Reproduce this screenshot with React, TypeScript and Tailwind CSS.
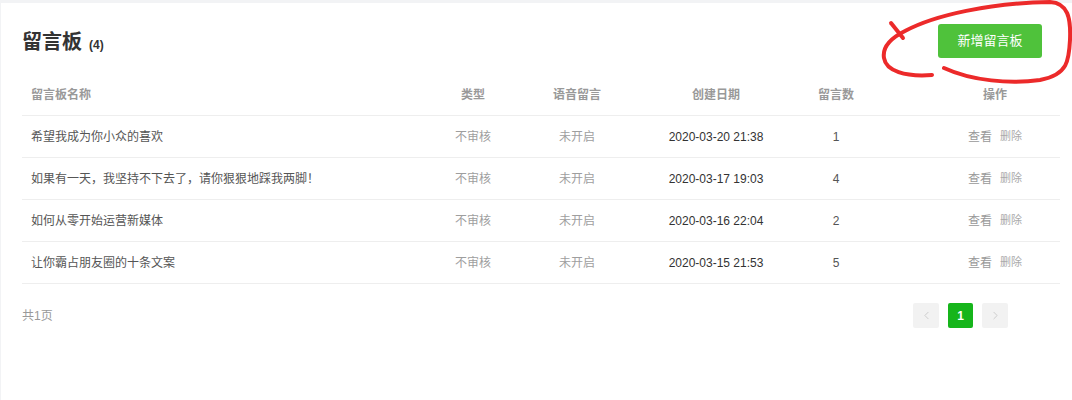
import { ChevronLeft, ChevronRight } from "lucide-react";

const rows = [
  { name: "希望我成为你小众的喜欢", date: "2020-03-20 21:38", count: 1 },
  { name: "如果有一天，我坚持不下去了，请你狠狠地踩我两脚！", date: "2020-03-17 19:03", count: 4 },
  { name: "如何从零开始运营新媒体", date: "2020-03-16 22:04", count: 2 },
  { name: "让你霸占朋友圈的十条文案", date: "2020-03-15 21:53", count: 5 },
];

const cols = "grid grid-cols-[398px_106px_102px_176px_64px_1fr]";

export default function App() {
  return (
    <div
      className="relative h-[400px] w-[1072px] overflow-hidden bg-[#f2f3f5] pl-[1px] pt-[3px]"
      style={{ fontFamily: '"Liberation Sans", "Noto Sans CJK SC", sans-serif' }}
    >
      <div className="h-[397px] bg-white pl-[21px] pr-[12px] pt-[21px]">
        {/* title bar */}
        <div className="flex h-[34px] items-center justify-between">
          <div className="mt-[4px] flex items-baseline gap-[7px] text-[#333]">
            <h1 className="text-[20px] font-bold leading-none">留言板</h1>
            <span className="text-[12px] font-bold">(4)</span>
          </div>
          <button className="mr-[18px] h-[34px] w-[104px] rounded-[3px] bg-[#4fc23b] text-[13px] text-white">
            新增留言板
          </button>
        </div>

        {/* table */}
        <div className="mt-[17px]">
          <div className={`${cols} h-[41px] items-center border-b border-[#eeeeee] text-[12px] font-bold text-[#999]`}>
            <div className="pl-[9px]">留言板名称</div>
            <div className="text-center">类型</div>
            <div className="text-center">语音留言</div>
            <div className="text-center">创建日期</div>
            <div className="text-center">留言数</div>
            <div className="pl-[62px] text-center">操作</div>
          </div>
          {rows.map((r) => (
            <div
              key={r.date}
              className={`${cols} h-[42px] items-center border-b border-[#eeeeee] text-[12px]`}
            >
              <div className="pl-[9px] text-[#555]">{r.name}</div>
              <div className="text-center text-[#9e9e9e]">不审核</div>
              <div className="text-center text-[#9e9e9e]">未开启</div>
              <div className="text-center text-[#333]">{r.date}</div>
              <div className="text-center text-[#555]">{r.count}</div>
              <div className="flex items-center justify-center gap-[8px] pl-[62px]">
                <span className="text-[12px] text-[#999]">查看</span>
                <span className="text-[11px] text-[#aaa]">删除</span>
              </div>
            </div>
          ))}
        </div>

        {/* footer */}
        <div className="mt-[19px] flex h-[25px] items-center justify-between pr-[52px]">
          <span className="text-[12px] text-[#999]">共1页</span>
          <div className="flex items-center gap-[9px]">
            <span className="flex h-[25px] w-[26px] items-center justify-center rounded-[2px] bg-[#f2f2f2]">
              <ChevronLeft size={13} strokeWidth={1.5} color="#c4c4c4" />
            </span>
            <span className="flex h-[25px] w-[25px] items-center justify-center rounded-[2px] bg-[#16b51b] text-[12px] font-bold text-white">
              1
            </span>
            <span className="flex h-[25px] w-[26px] items-center justify-center rounded-[2px] bg-[#f2f2f2]">
              <ChevronRight size={13} strokeWidth={1.5} color="#c4c4c4" />
            </span>
          </div>
        </div>
      </div>

      {/* hand-drawn annotation */}
      <svg
        className="pointer-events-none absolute left-0 top-0"
        width="1072"
        height="400"
        viewBox="0 0 1072 400"
        fill="none"
      >
        <path d="M891 23 L903 38" stroke="#ec2a2a" strokeWidth="4" strokeLinecap="round" />
        <path
          d="M932 75 C905 77 886 71 884 58 C882 46 893 37 905 31 C935 15 990 3 1050 2 C1068 3 1071 18 1070 40 C1069 60 1068 75 1040 80 C1010 84 972 81 944 68"
          stroke="#ec2a2a"
          strokeWidth="4"
          strokeLinecap="round"
        />
      </svg>
    </div>
  );
}
